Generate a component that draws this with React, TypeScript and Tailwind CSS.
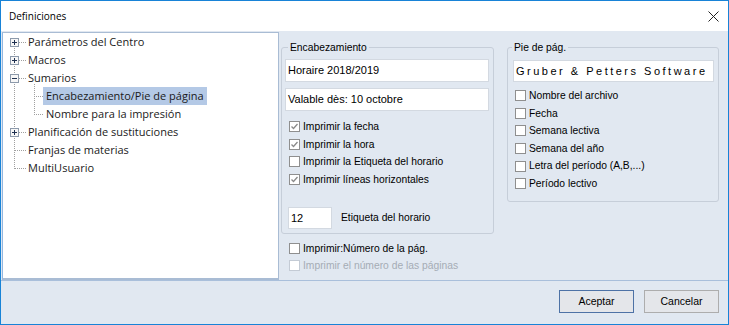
import type { ReactNode } from "react";

const UI_FONT = "font-['Liberation_Sans',Arial,sans-serif]";
const TREE_FONT = "font-['Open_Sans','Noto_Sans',sans-serif]";

type TreeItem = {
  label: string;
  level: 0 | 1;
  expander?: "plus" | "minus";
  selected?: boolean;
};

const TREE_ITEMS: TreeItem[] = [
  { label: "Parámetros del Centro", level: 0, expander: "plus" },
  { label: "Macros", level: 0, expander: "plus" },
  { label: "Sumarios", level: 0, expander: "minus" },
  { label: "Encabezamiento/Pie de página", level: 1, selected: true },
  { label: "Nombre para la impresión", level: 1 },
  { label: "Planificación de sustituciones", level: 0, expander: "plus" },
  { label: "Franjas de materias", level: 0 },
  { label: "MultiUsuario", level: 0 },
];

const ROW_H = 18;
const rowCenter = (i: number) => 9 + ROW_H * i;

// dotted connector lines + expander boxes, drawn under the tree labels
const TreeLines = () => {
  const last = TREE_ITEMS.length - 1;
  return (
    <svg
      className="pointer-events-none absolute top-0 left-0"
      width={275}
      height={246}
      shapeRendering="crispEdges"
    >
      <g stroke="#a0a0a0" strokeDasharray="1 1">
        <line x1={11.5} y1={rowCenter(0)} x2={11.5} y2={rowCenter(last) + 1} />
        {TREE_ITEMS.map((item, i) =>
          item.level === 0 ? (
            <line
              key={`h${i}`}
              x1={12}
              y1={rowCenter(i) + 0.5}
              x2={23}
              y2={rowCenter(i) + 0.5}
            />
          ) : (
            <line
              key={`h${i}`}
              x1={31}
              y1={rowCenter(i) + 0.5}
              x2={41}
              y2={rowCenter(i) + 0.5}
            />
          ),
        )}
        <line x1={31.5} y1={rowCenter(2) + 6} x2={31.5} y2={rowCenter(4) + 1} />
      </g>
      {TREE_ITEMS.map((item, i) => {
        if (!item.expander) return null;
        const c = rowCenter(i);
        return (
          <g key={`b${i}`}>
            <rect
              x={7.5}
              y={c - 3.5}
              width={8}
              height={8}
              fill="#f7f7f7"
              stroke="#8d9aab"
            />
            <line x1={9} y1={c + 0.5} x2={14} y2={c + 0.5} stroke="#1f3050" />
            {item.expander === "plus" ? (
              <line x1={11.5} y1={c - 2} x2={11.5} y2={c + 3} stroke="#1f3050" />
            ) : null}
          </g>
        );
      })}
    </svg>
  );
};

const TreePanel = () => (
  <div className="mt-[1px] ml-[1px] h-[248px] w-[277px] shrink-0 border border-b-2 border-[#a9bcd4] border-l-[#93b7e0] bg-white">
    <div className={`relative ${TREE_FONT} text-[11px] text-[#1a1a1a]`}>
      <TreeLines />
      {TREE_ITEMS.map((item) => (
        <div
          key={item.label}
          className={`relative flex h-[18px] items-center whitespace-nowrap ${
            item.level === 0 ? "pl-[22px]" : "pl-[40px]"
          }`}
        >
          <span
            className={`flex h-full items-center px-[3px] ${
              item.selected ? "bg-[#b4c9e6]" : ""
            }`}
          >
            {item.label}
          </span>
        </div>
      ))}
    </div>
  </div>
);

type CheckProps = {
  label: string;
  checked?: boolean;
  disabled?: boolean;
  rowClass: string;
};

const Check = ({ label, checked, disabled, rowClass }: CheckProps) => (
  <div className={`flex items-center whitespace-nowrap ${rowClass}`}>
    <span
      className={`flex h-[11px] w-[11px] shrink-0 items-center justify-center border bg-white ${
        disabled ? "border-[#c4cbd5]" : "border-[#8f8f8f]"
      }`}
    >
      {checked ? (
        <svg width={9} height={9} viewBox="0 0 9 9">
          <polyline
            points="1.5,4.5 3.5,6.5 7.5,2"
            fill="none"
            stroke="#8a8a8a"
            strokeWidth={1.3}
          />
        </svg>
      ) : null}
    </span>
    <span
      className={`ml-[3px] ${disabled ? "text-[#a5acb5]" : "text-black"}`}
    >
      {label}
    </span>
  </div>
);

const TextBox = ({
  children,
  className,
}: {
  children: ReactNode;
  className: string;
}) => (
  <div
    className={`flex items-center border border-[#d3d9e1] bg-white text-[11px] whitespace-nowrap text-black ${className}`}
  >
    {children}
  </div>
);

const HeaderGroup = () => (
  <fieldset className="mt-[10px] h-[193px] w-[213px] rounded-[3px] border border-[#c6ced9] pr-[4px] pl-[3px]">
    <legend className="ml-[3px] px-[2px] leading-[13px]">Encabezamiento</legend>
    <TextBox className="mt-[5px] h-[23px] pl-[2px]">Horaire 2018/2019</TextBox>
    <TextBox className="mt-[6px] h-[23px] pl-[2px]">
      Valable dès: 10 octobre
    </TextBox>
    <div className="mt-[7px] ml-[4px]">
      <Check rowClass="h-[17.5px]" label="Imprimir la fecha" checked />
      <Check rowClass="h-[17.5px]" label="Imprimir la hora" checked />
      <Check rowClass="h-[17.5px]" label="Imprimir la Etiqueta del horario" />
      <Check rowClass="h-[17.5px]" label="Imprimir líneas horizontales" checked />
    </div>
    <div className="mt-[19px] ml-[3px] flex items-center">
      <TextBox className="h-[22px] w-[44px] pl-[2px]">12</TextBox>
      <span className="ml-[9px]">Etiqueta del horario</span>
    </div>
  </fieldset>
);

const FooterGroup = () => (
  <fieldset className="mt-[10px] ml-[13px] h-[161px] w-[212px] rounded-[3px] border border-[#c6ced9] pr-[4px] pl-[5px]">
    <legend className="ml-[-1px] px-[2px] leading-[13px]">Pie de pág.</legend>
    <TextBox className="mt-[6px] h-[22px] pl-[2px] tracking-[2.5px]">
      Gruber &amp; Petters Software
    </TextBox>
    <div className="mt-[5px] ml-[2px]">
      <Check rowClass="h-[17.6px]" label="Nombre del archivo" />
      <Check rowClass="h-[17.6px]" label="Fecha" />
      <Check rowClass="h-[17.6px]" label="Semana lectiva" />
      <Check rowClass="h-[17.6px]" label="Semana del año" />
      <Check rowClass="h-[17.6px]" label="Letra del período (A,B,...)" />
      <Check rowClass="h-[17.6px]" label="Período lectivo" />
    </div>
  </fieldset>
);

const DialogButton = ({
  label,
  primary,
}: {
  label: string;
  primary?: boolean;
}) => (
  <button
    type="button"
    className={`flex h-[23px] w-[75px] items-center justify-center border bg-[#e4e6ea] text-[10.5px] text-black ${
      primary ? "border-[#4d72a6]" : "border-[#adadad]"
    }`}
  >
    {label}
  </button>
);

export default function App() {
  return (
    <div
      className={`flex h-[325px] w-[729px] flex-col border border-[#1883d7] bg-[#e1e8f1] ${UI_FONT} text-[10.3px] text-black`}
    >
      <div className="flex h-[30px] shrink-0 items-center justify-between bg-white pr-[9px] pl-[8px]">
        <span className={`${TREE_FONT} text-[10px] text-black`}>
          Definiciones
        </span>
        <svg width={11} height={11} viewBox="0 0 11 11">
          <path d="M0.5 0.5 L10.5 10.5 M10.5 0.5 L0.5 10.5" stroke="#222" strokeWidth={1} />
        </svg>
      </div>

      <div className="flex h-[250px] shrink-0 border-b border-[#a9bfdb]">
        <TreePanel />
        <div className="flex pl-[2px]">
          <div className="flex w-[213px] flex-col">
            <HeaderGroup />
            <div className="mt-[6px] ml-[8px]">
              <Check rowClass="h-[17px]" label="Imprimir:Número de la pág." />
              <Check
                rowClass="h-[17px]"
                label="Imprimir el número de las páginas"
                disabled
              />
            </div>
          </div>
          <div>
            <FooterGroup />
          </div>
        </div>
      </div>

      <div className="flex flex-1 items-start justify-end gap-[10px] pt-[9px] pr-[9px]">
        <DialogButton label="Aceptar" primary />
        <DialogButton label="Cancelar" />
      </div>
    </div>
  );
}
